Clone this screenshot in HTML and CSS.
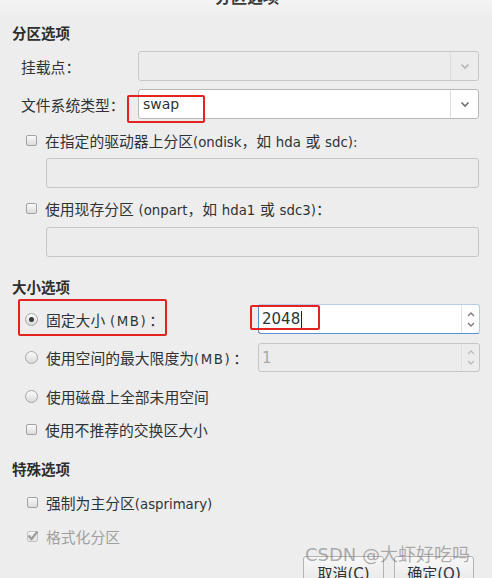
FILE: index.html
```html
<!DOCTYPE html>
<html lang="zh-CN">
<head>
<meta charset="utf-8">
<link rel="stylesheet" href="styles.css">
</head>
<body>
<div class="dialog">
  <div class="titlebar"><span class="title">分区选项</span></div>
  <div class="content">
    <div class="heading h-part">分区选项</div>

    <div class="form-row r-mount">
      <span class="label">挂载点：</span>
      <div class="combo combo-disabled">
        <span class="combo-text"></span>
        <span class="combo-btn"><svg width="10" height="7" viewBox="0 0 10 7"><path d="M1.5 1.5 L5 5 L8.5 1.5" fill="none" stroke="#b4b4b4" stroke-width="1.6"/></svg></span>
      </div>
    </div>

    <div class="form-row r-fs">
      <span class="label">文件系统类型：</span>
      <div class="combo">
        <span class="combo-text lat">swap</span>
        <span class="combo-btn"><svg width="10" height="7" viewBox="0 0 10 7"><path d="M1.5 1.5 L5 5 L8.5 1.5" fill="none" stroke="#6e6e6e" stroke-width="1.6"/></svg></span>
      </div>
    </div>

    <div class="opt-row r-ondisk"><span class="checkbox"></span><span class="opt-text">在指定的驱动器上分区<span class="lat">(ondisk</span>，如 <span class="lat">hda</span> 或 <span class="lat">sdc):</span></span></div>
    <div class="entry r-e1"></div>

    <div class="opt-row r-onpart"><span class="checkbox"></span><span class="opt-text">使用现存分区 <span class="lat">(onpart</span>，如 <span class="lat">hda1</span> 或 <span class="lat">sdc3)</span>：</span></div>
    <div class="entry r-e2"></div>

    <div class="heading h-size">大小选项</div>

    <div class="opt-row spin-row r-fixed">
      <span class="radio radio-on"></span><span class="opt-text">固定大小 <span class="lat wide">(MB)</span>：</span>
      <div class="spin spin-focus">
        <span class="spin-text">2048<span class="caret"></span></span>
        <span class="spin-btns">
          <svg width="10" height="6" viewBox="0 0 10 6"><path d="M2 5 L5 2 L8 5" fill="none" stroke="#7a7a7a" stroke-width="1.4"/></svg>
          <svg width="10" height="6" viewBox="0 0 10 6"><path d="M2 1 L5 4 L8 1" fill="none" stroke="#7a7a7a" stroke-width="1.4"/></svg>
        </span>
      </div>
    </div>

    <div class="opt-row spin-row r-max">
      <span class="radio"></span><span class="opt-text">使用空间的最大限度为<span class="lat wide">(MB)</span>：</span>
      <div class="spin spin-disabled">
        <span class="spin-text">1</span>
        <span class="spin-btns">
          <svg width="10" height="6" viewBox="0 0 10 6"><path d="M2 5 L5 2 L8 5" fill="none" stroke="#bdbdbd" stroke-width="1.4"/></svg>
          <svg width="10" height="6" viewBox="0 0 10 6"><path d="M2 1 L5 4 L8 1" fill="none" stroke="#bdbdbd" stroke-width="1.4"/></svg>
        </span>
      </div>
    </div>

    <div class="opt-row r-all"><span class="radio"></span><span class="opt-text">使用磁盘上全部未用空间</span></div>
    <div class="opt-row r-swap"><span class="checkbox"></span><span class="opt-text">使用不推荐的交换区大小</span></div>

    <div class="heading h-special">特殊选项</div>

    <div class="opt-row r-primary"><span class="checkbox"></span><span class="opt-text">强制为主分区<span class="lat">(asprimary)</span></span></div>
    <div class="opt-row r-format disabled"><span class="checkbox checkbox-on"><svg width="12" height="11" viewBox="0 0 12 11"><path d="M1.5 5.5 L4.5 9 L10.5 1.5" fill="none" stroke="#9c9c9c" stroke-width="2.2"/></svg></span><span class="opt-text">格式化分区</span></div>

    <div class="buttons">
      <span class="btn btn-cancel">取消<span class="lat">(C)</span></span>
      <span class="btn btn-ok">确定<span class="lat">(O)</span></span>
    </div>
  </div>

  <div class="mark mark-fs"></div>
  <div class="mark mark-fixed"></div>
  <div class="mark mark-value"></div>
  <div class="watermark">CSDN @大虾好吃吗</div>
</div>
</body>
</html>
```

FILE: styles.css
```css
* { box-sizing: border-box; }
html, body {
  margin: 0;
  padding: 0;
  background: #ededed;
}
body {
  font-family: "DejaVu Sans", "Noto Sans CJK SC", sans-serif;
  font-size: 14.8px;
  color: #2e3436;
}
.lat {
  font-size: 13.3px;
}
.wide {
  letter-spacing: 1.6px;
  margin-right: 2px;
}
.dialog {
  position: relative;
  width: 492px;
  height: 578px;
  overflow: hidden;
  background: #ededed;
}
.titlebar {
  height: 17px;
  overflow: hidden;
  text-align: center;
  background: linear-gradient(#f4f4f4, #eeeeee);
}
.title {
  display: block;
  margin-top: -10px;
  line-height: 16px;
  font-size: 16px;
  font-weight: bold;
  color: #3a3a3a;
  padding-left: 2px;
}
.content {
  padding-left: 12px;
}
.heading {
  height: 20px;
  line-height: 20px;
  font-weight: bold;
  font-size: 14.5px;
  color: #2e2e2e;
}
.h-part { margin-top: 7px; }
.h-size { margin-top: 21px; }
.h-special { margin-top: 21px; }

.form-row {
  display: flex;
  align-items: center;
  height: 30px;
  padding-left: 9px;
}
.r-mount { margin-top: 7px; }
.r-fs { margin-top: 8px; }
.label {
  width: 117px;
  flex: none;
}
.combo {
  display: flex;
  width: 341px;
  height: 30px;
  border: 1px solid #b9b9b9;
  border-radius: 3px;
  background: #ffffff;
}
.combo-disabled {
  background: #ececec;
  border-color: #c8c8c8;
}
.combo-text {
  flex: 1;
  line-height: 28px;
  padding-left: 4px;
  color: #2e3436;
}
.combo-text.lat { font-size: 14px; }
.combo-btn {
  width: 28px;
  border-left: 1px solid #dddddd;
  display: flex;
  align-items: center;
  justify-content: center;
}
.combo-disabled .combo-btn { border-left-color: #dedede; }

.opt-row {
  display: flex;
  align-items: center;
  height: 20px;
  padding-left: 14px;
}
.opt-text { white-space: nowrap; }
.checkbox {
  flex: none;
  width: 11px;
  height: 11px;
  margin-right: 8px;
  border: 1px solid #a2a2a2;
  border-radius: 2px;
  background: linear-gradient(#fafafa, #dcdcdc);
  position: relative;
}
.checkbox-on {
  border-color: #c4c4c4;
  background: linear-gradient(#f4f4f4, #e4e4e4);
}
.checkbox-on svg {
  position: absolute;
  left: -1px;
  top: -2px;
}
.radio {
  flex: none;
  width: 13px;
  height: 13px;
  margin-left: -1px;
  margin-right: 8px;
  border: 1px solid #a6a6a6;
  border-radius: 50%;
  background: linear-gradient(#fbfbfb, #dadada);
  position: relative;
}
.radio-on::after {
  content: "";
  position: absolute;
  left: 3px;
  top: 3px;
  width: 5px;
  height: 5px;
  border-radius: 50%;
  background: #3a3a3a;
}
.disabled .opt-text { color: #a0a0a0; }

.r-ondisk { margin-top: 11px; }
.r-onpart { margin-top: 10px; }
.entry {
  margin-left: 34px;
  width: 433px;
  height: 30px;
  border: 1px solid #c6c6c6;
  border-radius: 3px;
  background: #ececec;
}
.r-e1 { margin-top: 8px; }
.r-e2 { margin-top: 9px; }

.spin-row { height: 30px; }
.r-fixed { margin-top: 6px; }
.r-max { margin-top: 9px; height: 29px; }
.r-all { margin-top: 14px; }
.r-swap { margin-top: 13px; }
.r-primary { margin-top: 12px; padding-left: 15px; }
.r-format { margin-top: 14px; padding-left: 15px; }

.spin {
  margin-left: auto;
  margin-right: 12px;
  width: 222px;
  height: 100%;
  display: flex;
  border: 1px solid #c2c2c2;
  border-radius: 3px;
  background: #ffffff;
}
.spin-focus {
  border-color: #b9cde4;
  border-left-color: #5a92d0;
  border-bottom-color: #5a92d0;
}
.spin-disabled {
  background: #ececec;
  border-color: #c6c6c6;
}
.spin-text {
  flex: 1;
  display: flex;
  align-items: center;
  padding-left: 3px;
  font-size: 15px;
}
.spin-disabled .spin-text { color: #a8a8a8; }
.caret {
  display: inline-block;
  width: 1px;
  height: 17px;
  background: #222;
  margin-left: 1px;
}
.spin-btns {
  width: 18px;
  border-left: 1px solid #e2e2e2;
  display: flex;
  flex-direction: column;
  align-items: center;
  justify-content: space-around;
  padding: 3px 0;
}

.buttons {
  display: flex;
  justify-content: flex-end;
  gap: 10px;
  margin-top: 10px;
  padding-right: 18px;
}
.btn {
  width: 81px;
  height: 34px;
  border: 1px solid #b4b4b4;
  border-radius: 3px;
  background: linear-gradient(#f8f8f8, #e4e4e4);
  text-align: center;
  line-height: 34px;
  font-size: 15px;
  color: #2e3436;
}
.btn .lat { font-size: 15px; }
.btn-ok { width: 80px; }

.mark {
  position: absolute;
  border: 2px solid #e3231f;
  border-radius: 2px;
}
.mark-fs { left: 127px; top: 95px; width: 78px; height: 28px; }
.mark-fixed { left: 18px; top: 299px; width: 149px; height: 37px; }
.mark-value { left: 250px; top: 305px; width: 70px; height: 25px; }

.watermark {
  position: absolute;
  left: 305px;
  top: 544px;
  font-size: 18px;
  line-height: 22px;
  color: rgba(110, 110, 110, 0.55);
  white-space: nowrap;
}
```
